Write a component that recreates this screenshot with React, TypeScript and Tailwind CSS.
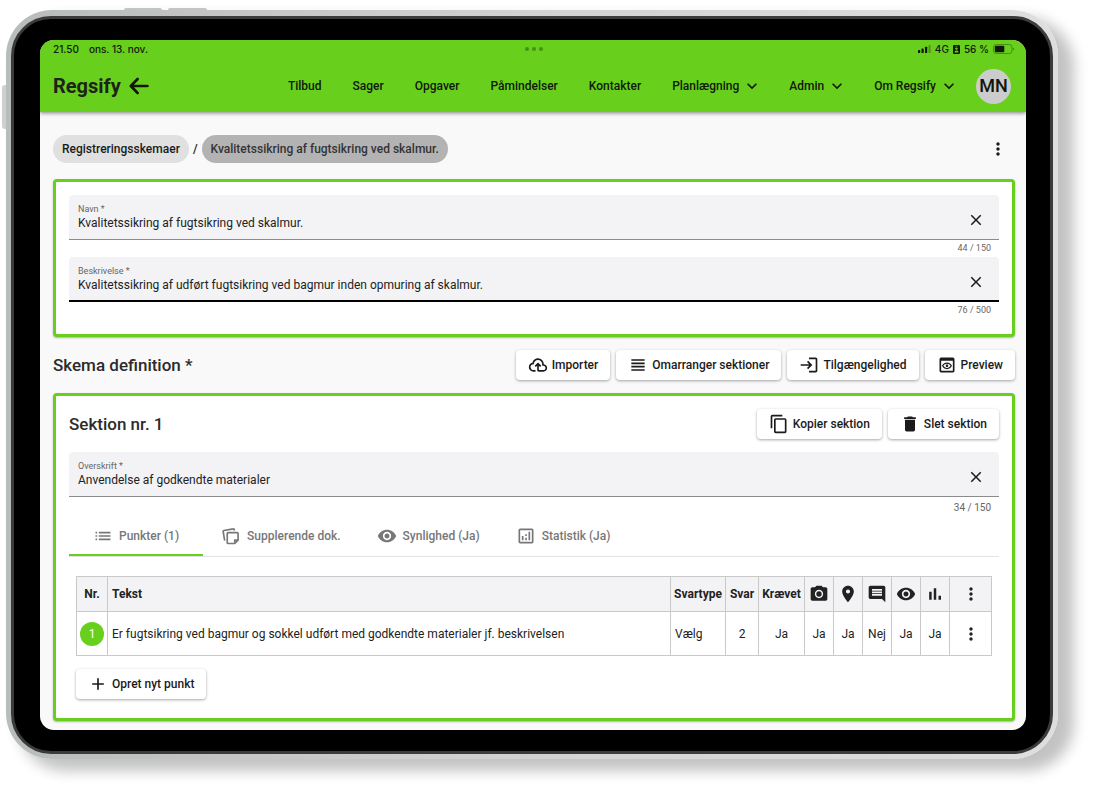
import { useId, useState } from "react";
import type { ReactNode } from "react";
import type { IconType } from "react-icons";
import {
  MdAdd,
  MdClose,
  MdComment,
  MdContentCopy,
  MdDelete,
  MdExpandMore,
  MdList,
  MdLogin,
  MdMoreVert,
  MdOutlineAnalytics,
  MdOutlinePreview,
  MdPhotoCamera,
  MdPlace,
  MdViewHeadline,
  MdVisibility,
} from "react-icons/md";

const NAV = [
  { label: "Tilbud" },
  { label: "Sager" },
  { label: "Opgaver" },
  { label: "Påmindelser" },
  { label: "Kontakter" },
  { label: "Planlægning", menu: true },
  { label: "Admin", menu: true },
  { label: "Om Regsify", menu: true },
];

const ROWS = [
  {
    nr: 1,
    text: "Er fugtsikring ved bagmur og sokkel udført med godkendte materialer jf. beskrivelsen",
    type: "Vælg",
    cells: ["2", "Ja", "Ja", "Ja", "Nej", "Ja", "Ja"],
  },
];

function BackIcon({ className }: { className?: string }) {
  return (
    <svg
      viewBox="0 0 20 18"
      fill="none"
      stroke="currentColor"
      strokeWidth="2.6"
      strokeLinecap="round"
      strokeLinejoin="round"
      className={className}
      aria-hidden
    >
      <path d="M18.500 9H2M8.600 2 1.800 9l6.800 7" />
    </svg>
  );
}

function CloudUploadIcon({ className }: { className?: string }) {
  return (
    <svg viewBox="0 0 24 24" fill="currentColor" className={className} aria-hidden>
      <path d="M6.5 20Q4.22 20 2.61 18.43 1 16.85 1 14.58 1 12.63 2.17 11.1 3.35 9.57 5.25 9.15 5.88 6.85 7.75 5.43 9.63 4 12 4 14.93 4 16.96 6.04 19 8.07 19 11 20.73 11.2 21.86 12.5 23 13.78 23 15.5 23 17.38 21.69 18.69 20.38 20 18.5 20H13Q12.18 20 11.59 19.41 11 18.83 11 18V12.85L9.4 14.4L8 13L12 9L16 13L14.6 14.4L13 12.85V18H18.5Q19.55 18 20.27 17.27 21 16.55 21 15.5 21 14.45 20.27 13.73 19.55 13 18.5 13H17V11Q17 8.93 15.54 7.46 14.08 6 12 6 9.93 6 8.46 7.46 7 8.93 7 11H6.5Q5.05 11 4.03 12.03 3 13.05 3 14.5 3 15.95 4.03 17 5.05 18 6.5 18H9V20Z" />
    </svg>
  );
}

function NoteStackIcon({ className }: { className?: string }) {
  return (
    <svg viewBox="0 0 24 24" fill="none" stroke="currentColor" strokeWidth="2" className={className} aria-hidden>
      <path d="M8.5 8h11a1 1 0 0 1 1 1v8l-4 4h-8a1 1 0 0 1-1-1V9a1 1 0 0 1 1-1Z" />
      <path d="M20.500 16h-5v5Z" fill="currentColor" stroke="none" />
      <path d="M4.400 17.500 2.600 6.600a1 1 0 0 1 .8-1.200l11.200-2a1 1 0 0 1 1.200.8L16 5.500" />
    </svg>
  );
}

function BarsIcon({ className }: { className?: string }) {
  return (
    <svg viewBox="0 0 24 24" fill="currentColor" className={className} aria-hidden>
      <path d="M5 9.200h3V19H5zM10.500 5h3v14h-3zM16.200 14h3v5h-3z" />
    </svg>
  );
}

function StatusBar() {
  return (
    <div className="grid grid-cols-3 items-center pt-px pr-[11px] pl-[13px] font-[Inter,sans-serif] text-[10px] leading-4 font-medium">
      <div className="flex gap-[10px]">
        <span>21.50</span>
        <span>ons. 13. nov.</span>
      </div>
      <div className="flex justify-center gap-[3px] text-[#46920f]">
        <span className="size-1 rounded-full bg-current" />
        <span className="size-1 rounded-full bg-current" />
        <span className="size-1 rounded-full bg-current" />
      </div>
      <div className="flex items-center justify-end gap-1">
        <svg viewBox="0 0 13 8" className="h-2 w-[13px]" fill="currentColor" aria-hidden>
          <rect x="0" y="5" width="2.2" height="3" rx=".5" />
          <rect x="3.5" y="3.5" width="2.2" height="4.5" rx=".5" />
          <rect x="7" y="1.8" width="2.2" height="6.2" rx=".5" />
          <rect x="10.5" y="0" width="2.2" height="8" rx=".5" opacity=".3" />
        </svg>
        <span>4G</span>
        <svg viewBox="0 0 7 9" className="h-[9px] w-[7px]" aria-hidden>
          <rect width="7" height="9" rx="1.2" fill="currentColor" />
          <circle cx="3.5" cy="3.6" r="1.2" fill="#69cf1d" />
          <path d="M1.5 7.5c0-2.6 4-2.6 4 0z" fill="#69cf1d" />
          <path d="M2.3 1.2h2.4" stroke="#69cf1d" strokeWidth=".6" />
        </svg>
        <span>56 %</span>
        <svg viewBox="0 0 22 10" className="h-[10px] w-[22px]" aria-hidden>
          <rect x=".5" y=".5" width="18.5" height="9" rx="2.6" fill="none" stroke="#3f8a10" strokeWidth=".9" />
          <rect x="1.8" y="1.8" width="9.5" height="6.4" rx="1" fill="currentColor" />
          <path d="M20.2 3.4v3.2c1.4-.5 1.4-2.7 0-3.2z" fill="#3f8a10" />
        </svg>
      </div>
    </div>
  );
}

function TopNav() {
  return (
    <div className="flex h-[55px] items-center pt-[3px] pr-[15px] pl-[13px]">
      <a href="#" className="text-[20px] leading-6 font-bold text-[#1c2419]">
        Regsify
      </a>
      <button aria-label="Tilbage" className="ml-2">
        <BackIcon className="h-[18px] w-5" />
      </button>
      <nav className="ml-auto flex items-center gap-[31px] text-[12px] leading-4 font-medium">
        {NAV.map((item) => (
          <a key={item.label} href="#" className="flex items-center whitespace-nowrap">
            {item.label}
            {item.menu && <MdExpandMore className="-mr-1 ml-[3px] size-5" />}
          </a>
        ))}
      </nav>
      <button className="ml-[21px] size-[35px] rounded-full bg-[#cccccc] text-[18px] leading-5 font-medium">
        MN
      </button>
    </div>
  );
}

function Panel({ children, className = "" }: { children: ReactNode; className?: string }) {
  return (
    <section
      className={`rounded-[4px] border-3 border-[#69cf1d] bg-white px-[13px] pt-[13px] shadow-[0_1px_2px_rgba(0,0,0,0.3)] ${className}`}
    >
      {children}
    </section>
  );
}

type FieldProps = { label: string; initial: string; count: string; active?: boolean; roomy?: boolean };

// Filled text field with a clear button and a character counter underneath.
function Field({ label, initial, count, active, roomy }: FieldProps) {
  const id = useId();
  const [value, setValue] = useState(initial);
  return (
    <div>
      <div
        className={`flex h-[45px] items-center rounded-t-[4px] bg-[#f3f3f5] pr-[14px] pl-[9px] ${
          active ? "border-b-2 border-black" : "border-b border-[#8b8b8b]"
        }`}
      >
        <div className="flex min-w-0 flex-1 flex-col">
          <label htmlFor={id} className="text-[9px] leading-3 text-[#666666]">
            {label}
          </label>
          <input
            id={id}
            value={value}
            onChange={(e) => setValue(e.target.value)}
            className="w-full bg-transparent text-[12px] leading-4 text-[#222222] outline-none"
          />
        </div>
        <button aria-label={`Ryd ${label}`} className="mt-[6px]" onClick={() => setValue("")}>
          <MdClose className="size-[18px]" />
        </button>
      </div>
      <div
        className={`pr-2 text-right text-[#666666] ${
          roomy ? "text-[10px] leading-[21px]" : "text-[9px] leading-[17px]"
        }`}
      >
        {count}
      </div>
    </div>
  );
}

function ActionButton({ icon, children }: { icon: ReactNode; children: ReactNode }) {
  return (
    <button className="flex h-[30px] items-center gap-1 rounded-[4px] bg-white px-3 text-[12px] leading-4 font-medium whitespace-nowrap shadow-[0_1px_3px_rgba(0,0,0,0.35)]">
      {icon}
      {children}
    </button>
  );
}

function Tab({ icon, children, selected }: { icon: ReactNode; children: ReactNode; selected?: boolean }) {
  return (
    <button
      role="tab"
      aria-selected={!!selected}
      className={`flex h-[38px] items-center gap-[6px] border-b-2 text-[12px] leading-4 font-medium whitespace-nowrap text-[#777777] ${
        selected ? "border-[#69cf1d] px-6" : "border-transparent px-[18px]"
      }`}
    >
      {icon}
      {children}
    </button>
  );
}

const HEAD_ICONS: { icon: IconType | typeof BarsIcon; label: string }[] = [
  { icon: MdPhotoCamera, label: "Foto" },
  { icon: MdPlace, label: "Placering" },
  { icon: MdComment, label: "Kommentar" },
  { icon: MdVisibility, label: "Synlighed" },
  { icon: BarsIcon, label: "Statistik" },
];

function PointsTable() {
  const th = "border border-[#c9c9c9] p-0 font-bold";
  const td = "border border-[#c9c9c9] p-0 text-center";
  return (
    <table className="w-full table-fixed border-collapse text-[12px] leading-4 text-[#222222]">
      <colgroup>
        <col className="w-[31px]" />
        <col />
        <col className="w-[55px]" />
        <col className="w-[33px]" />
        <col className="w-[46px]" />
        <col className="w-[29px]" />
        <col className="w-[29px]" />
        <col className="w-[29px]" />
        <col className="w-[29px]" />
        <col className="w-[29px]" />
        <col className="w-[42px]" />
      </colgroup>
      <thead>
        <tr className="h-[35px] bg-[#f3f3f5]">
          <th className={th}>Nr.</th>
          <th className={`${th} pl-1 text-left`}>Tekst</th>
          <th className={th}>Svartype</th>
          <th className={th}>Svar</th>
          <th className={th}>Krævet</th>
          {HEAD_ICONS.map(({ icon: Icon, label }) => (
            <th key={label} className={th} aria-label={label}>
              <Icon className="mx-auto size-5" />
            </th>
          ))}
          <th className={th}>
            <button aria-label="Flere valg" className="block w-full">
              <MdMoreVert className="mx-auto size-5" />
            </button>
          </th>
        </tr>
      </thead>
      <tbody>
        {ROWS.map((row) => (
          <tr key={row.nr} className="h-11">
            <td className={td}>
              <span className="mx-auto flex size-6 items-center justify-center rounded-full bg-[#69cf1d] text-white">
                {row.nr}
              </span>
            </td>
            <td className="truncate border border-[#c9c9c9] p-0 pl-1">{row.text}</td>
            <td className="border border-[#c9c9c9] p-0 pl-1">{row.type}</td>
            {row.cells.map((cell, i) => (
              <td key={i} className={td}>
                {cell}
              </td>
            ))}
            <td className={td}>
              <button aria-label="Flere valg" className="block w-full">
                <MdMoreVert className="mx-auto size-5" />
              </button>
            </td>
          </tr>
        ))}
      </tbody>
    </table>
  );
}

function Tablet({ children }: { children: ReactNode }) {
  return (
    <div className="relative mt-[10px] mr-[42px] mb-[30px] ml-[6px] rounded-[46px] bg-linear-to-r from-[#b9bcbc] via-[#d2d2d2] to-[#dedede] p-[5px] pt-[6px] shadow-[14px_10px_14px_2px_rgba(0,0,0,0.24)]">
      {/* Hardware buttons on the frame */}
      <span className="absolute -top-[2px] left-[118px] h-[2px] w-[38px] rounded-t-[2px] bg-[#c4c4c4]" />
      <span className="absolute -top-[2px] left-[162px] h-[2px] w-[39px] rounded-t-[2px] bg-[#c4c4c4]" />
      <span className="absolute top-[75px] -left-1 h-11 w-1 rounded-l-[3px] bg-[#cfcfcf]" />
      <div className="rounded-[40px] border-3 border-[#3b3b3b] bg-black py-[21px] pr-6 pl-[26px]">
        <div className="overflow-hidden rounded-[14px] bg-[#f9f9f9]">{children}</div>
      </div>
    </div>
  );
}

export default function App() {
  return (
    <div className="flow-root min-h-screen bg-white font-[Roboto,sans-serif] text-[#1b1b1b]">
      <Tablet>
        <header className="bg-[#69cf1d] text-[#10180b] shadow-[0_1px_4px_rgba(0,0,0,0.5)]">
          <StatusBar />
          <TopNav />
        </header>

        <main className="pt-[23px] pr-[11px] pb-[9px] pl-[13px]">
          <div className="flex items-center gap-1 text-[12px] leading-4 font-medium">
            <a href="#" className="rounded-full bg-[#e0e0e0] px-[9px] py-[6px]">
              Registreringsskemaer
            </a>
            <span>/</span>
            <a href="#" aria-current="page" className="rounded-full bg-[#b3b3b3] px-[9px] py-[6px] text-[#333333]">
              Kvalitetssikring af fugtsikring ved skalmur.
            </a>
            <button aria-label="Flere valg" className="mr-[7px] ml-auto">
              <MdMoreVert className="size-5" />
            </button>
          </div>

          <Panel className="mt-4 pb-[15px]">
            <Field label="Navn *" initial="Kvalitetssikring af fugtsikring ved skalmur." count="44 / 150" />
            <Field
              label="Beskrivelse *"
              initial="Kvalitetssikring af udført fugtsikring ved bagmur inden opmuring af skalmur."
              count="76 / 500"
              active
            />
          </Panel>

          <div className="my-[13px] flex items-center justify-between">
            <h1 className="text-[17px] leading-6 font-medium text-[#2b2b2b]">Skema definition *</h1>
            <div className="flex gap-[6px]">
              <ActionButton icon={<CloudUploadIcon className="size-5" />}>Importer</ActionButton>
              <ActionButton icon={<MdViewHeadline className="size-5" />}>Omarranger sektioner</ActionButton>
              <ActionButton icon={<MdLogin className="size-5" />}>Tilgængelighed</ActionButton>
              <ActionButton icon={<MdOutlinePreview className="size-5" />}>Preview</ActionButton>
            </div>
          </div>

          <Panel className="pb-[19px]">
            <div className="mb-[13px] flex items-center justify-between">
              <h2 className="text-[17px] leading-6 font-medium text-[#2b2b2b]">Sektion nr. 1</h2>
              <div className="flex gap-[6px]">
                <ActionButton icon={<MdContentCopy className="size-5" />}>Kopier sektion</ActionButton>
                <ActionButton icon={<MdDelete className="size-5" />}>Slet sektion</ActionButton>
              </div>
            </div>

            <Field label="Overskrift *" initial="Anvendelse af godkendte materialer" count="34 / 150" roomy />

            <div role="tablist" className="flex border-b border-[#e3e3e3]">
              <Tab icon={<MdList className="size-5" />} selected>
                Punkter (1)
              </Tab>
              <Tab icon={<NoteStackIcon className="size-5" />}>Supplerende dok.</Tab>
              <Tab icon={<MdVisibility className="size-5" />}>Synlighed (Ja)</Tab>
              <Tab icon={<MdOutlineAnalytics className="size-5" />}>Statistik (Ja)</Tab>
            </div>

            <div className="px-[7px] pt-[19px]">
              <PointsTable />
              <div className="mt-[13px] flex">
                <ActionButton icon={<MdAdd className="size-5" />}>Opret nyt punkt</ActionButton>
              </div>
            </div>
          </Panel>
        </main>
      </Tablet>
    </div>
  );
}
